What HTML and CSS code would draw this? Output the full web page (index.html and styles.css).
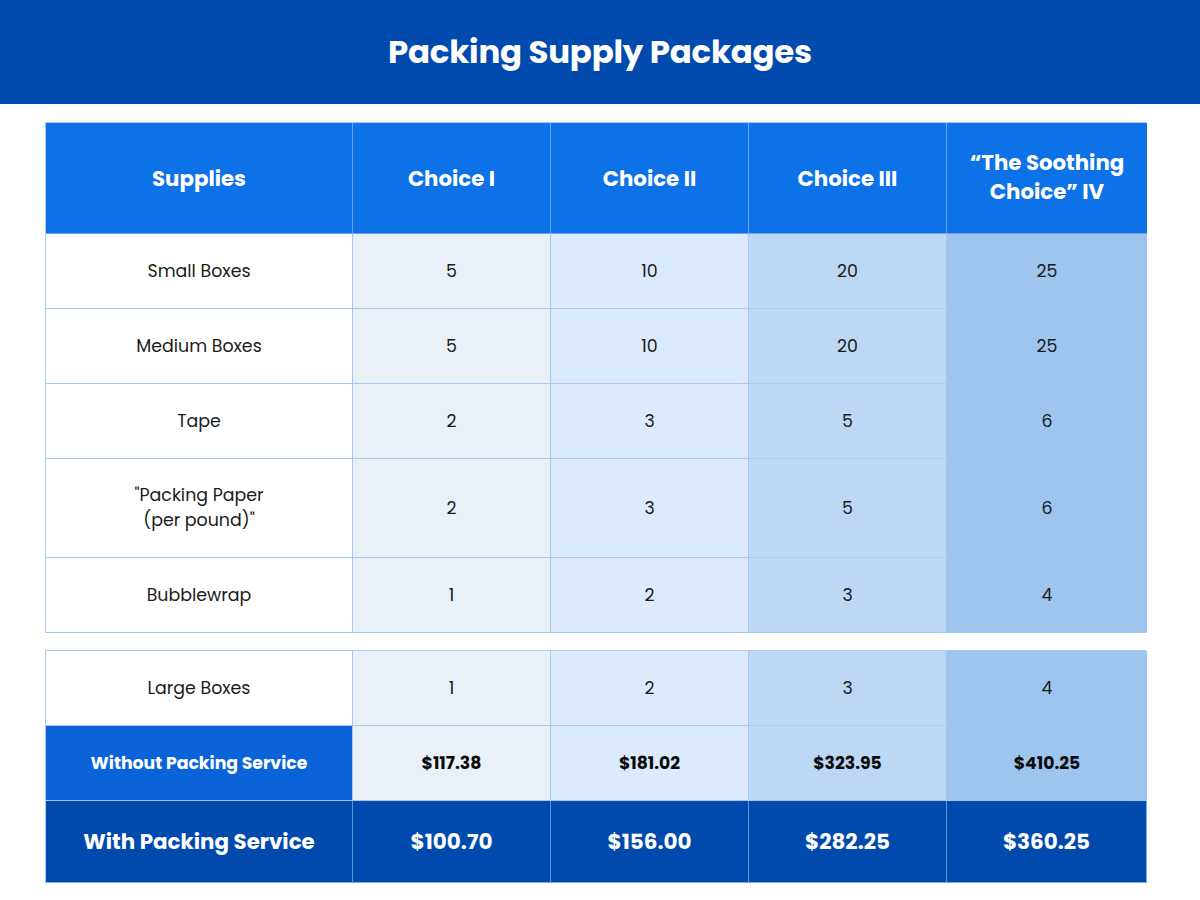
FILE: index.html
```html
<!DOCTYPE html>
<html lang="en">
<head>
<meta charset="utf-8">
<title>Packing Supply Packages</title>
<link rel="stylesheet" href="styles.css">
</head>
<body>
<header class="banner">
  <h1 class="title">Packing Supply Packages</h1>
</header>
<main class="content">
  <div class="grid grid-top">
    <div class="cell head">Supplies</div>
    <div class="cell head">Choice I</div>
    <div class="cell head">Choice II</div>
    <div class="cell head">Choice III</div>
    <div class="cell head c4">“The Soothing<br>Choice” IV</div>

    <div class="cell label">Small Boxes</div>
    <div class="cell c1">5</div>
    <div class="cell c2">10</div>
    <div class="cell c3">20</div>
    <div class="cell c4 nob">25</div>

    <div class="cell label">Medium Boxes</div>
    <div class="cell c1">5</div>
    <div class="cell c2">10</div>
    <div class="cell c3">20</div>
    <div class="cell c4 nob">25</div>

    <div class="cell label">Tape</div>
    <div class="cell c1">2</div>
    <div class="cell c2">3</div>
    <div class="cell c3">5</div>
    <div class="cell c4 nob">6</div>

    <div class="cell label tall">"Packing Paper<br>(per pound)"</div>
    <div class="cell c1 tall">2</div>
    <div class="cell c2 tall">3</div>
    <div class="cell c3 tall">5</div>
    <div class="cell c4 nob tall">6</div>

    <div class="cell label">Bubblewrap</div>
    <div class="cell c1">1</div>
    <div class="cell c2">2</div>
    <div class="cell c3">3</div>
    <div class="cell c4">4</div>
  </div>

  <div class="grid grid-bottom">
    <div class="cell label">Large Boxes</div>
    <div class="cell c1">1</div>
    <div class="cell c2">2</div>
    <div class="cell c3">3</div>
    <div class="cell c4 nob">4</div>

    <div class="cell sub-label">Without Packing Service</div>
    <div class="cell c1 price">$117.38</div>
    <div class="cell c2 price">$181.02</div>
    <div class="cell c3 price">$323.95</div>
    <div class="cell c4 price">$410.25</div>

    <div class="cell total total-label">With Packing Service</div>
    <div class="cell total">$100.70</div>
    <div class="cell total">$156.00</div>
    <div class="cell total">$282.25</div>
    <div class="cell total last">$360.25</div>
  </div>
</main>
</body>
</html>
```
FILE: styles.css
```css
* { box-sizing: border-box; }

html, body {
  margin: 0;
  padding: 0;
  background: #ffffff;
}

body {
  font-family: "Poppins", "Inter", "Open Sans", sans-serif;
  color: #1b1b1b;
  width: 1200px;
  height: 900px;
  overflow: hidden;
}

.banner {
  height: 104px;
  background: #004aad;
  display: flex;
  align-items: center;
  justify-content: center;
}

.title {
  margin: 0;
  color: #ffffff;
  font-size: 32.4px;
  font-weight: 700;
  letter-spacing: -0.2px;
}

.content {
  padding: 18px 0 0 45px;
  display: flex;
  flex-direction: column;
  gap: 17px;
}

.grid {
  display: grid;
  grid-template-columns: 307px 198px 198px 198px 200px;
  width: 1101px;
  border-top: 1px solid #a9c9f1;
  border-left: 1px solid #a9c9f1;
}

.grid-top {
  grid-template-rows: 111px 75px 75px 75px 99px 75px;
}

.grid-bottom {
  grid-template-rows: 75px 75px 82px;
}

.cell {
  display: flex;
  align-items: center;
  justify-content: center;
  text-align: center;
  font-size: 17.4px;
  line-height: 25px;
  border-right: 1px solid #a9c9f1;
  border-bottom: 1px solid #a9c9f1;
  background: #ffffff;
}

.head {
  background: #0d72e8;
  color: #ffffff;
  font-weight: 700;
  font-size: 21.3px;
  line-height: 29px;
  border-right-color: #6aa6f0;
  border-bottom-color: #6aa6f0;
}

.head.c4 {
  background: #0d72e8;
  border-right: none;
  padding-bottom: 2px;
}

.label { background: #ffffff; color: #1b1b1b; }

.c1 { background: #eaf0f7; }
.c2 { background: #dbeafd; }
.c3 { background: #bcd8f5; }
.c4 {
  background: #9dc5ee;
  border-right: none;
}
.c4.nob { border-bottom-color: #9dc5ee; }

.price {
  font-weight: 700;
  color: #0b0b0b;
  font-size: 17.2px;
}

.sub-label {
  background: #0a63d9;
  color: #ffffff;
  font-weight: 700;
  font-size: 17.3px;
}

.total {
  background: #004aad;
  color: #ffffff;
  font-weight: 700;
  font-size: 21.5px;
  border-right-color: #5f93d8;
  border-bottom-color: #7aa9e6;
}

.total-label { font-size: 21.4px; }

.total.last { border-right: 1px solid #7aa9e6; }
```
